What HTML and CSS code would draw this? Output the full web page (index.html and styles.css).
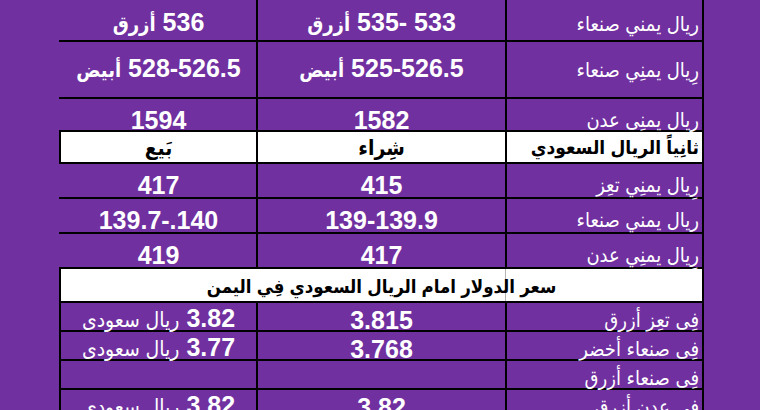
FILE: index.html
```html
<!DOCTYPE html>
<html lang="ar">
<head>
<meta charset="utf-8">
<title>أسعار الصرف</title>
<link rel="stylesheet" href="styles.css">
</head>
<body>
<table class="rates" dir="rtl">
  <colgroup>
    <col class="c-label">
    <col class="c-mid">
    <col class="c-side">
  </colgroup>
  <tr class="r1">
    <td class="label">ريال يمني صنعاء</td>
    <td class="num">533 -535 <span class="ar">أزرق</span></td>
    <td class="num">536 <span class="ar">أزرق</span></td>
  </tr>
  <tr class="r2">
    <td class="label">رِيال يمنِي صنعاء</td>
    <td class="num">525-526.5 <span class="ar">أبيض</span></td>
    <td class="num">528-526.5 <span class="ar">أبيض</span></td>
  </tr>
  <tr class="r3">
    <td class="label">ريال يمنِى عدن</td>
    <td class="num">1582</td>
    <td class="num">1594</td>
  </tr>
  <tr class="head">
    <td class="hlabel">ثانِياً الريال السعودي</td>
    <td class="hcol">شِراء</td>
    <td class="hcol">بَيع</td>
  </tr>
  <tr class="r35">
    <td class="label">رِيال يمنِي تعِز</td>
    <td class="num">415</td>
    <td class="num">417</td>
  </tr>
  <tr class="r35">
    <td class="label">ريال يمني صنعاء</td>
    <td class="num">139-139.9</td>
    <td class="num">140.-139.7</td>
  </tr>
  <tr class="r35">
    <td class="label">رِيال يمنِي عدن</td>
    <td class="num">417</td>
    <td class="num">419</td>
  </tr>
  <tr class="head head2">
    <td class="htitle" colspan="3">سعر الدولار امام الريال السعودي فِي اليمن</td>
  </tr>
  <tr class="r29">
    <td class="label">فِى تعِز أزرق</td>
    <td class="num">3.815</td>
    <td class="num">3.82 <span class="unit">ريال سعودى</span></td>
  </tr>
  <tr class="r29">
    <td class="label">فِى صنعاء أخضر</td>
    <td class="num">3.768</td>
    <td class="num">3.77 <span class="unit">ريال سعودى</span></td>
  </tr>
  <tr class="r29">
    <td class="label">فِى صنعاء أزرق</td>
    <td class="num"></td>
    <td class="num"></td>
  </tr>
  <tr class="r29">
    <td class="label">فِى عدن أزرق</td>
    <td class="num">3.82</td>
    <td class="num">3.82 <span class="unit">ريال سعودى</span></td>
  </tr>
</table>
</body>
</html>
```
FILE: styles.css
```css
html, body {
  margin: 0;
  padding: 0;
}

body {
  background: #7030a0;
  font-family: "Liberation Sans", "DejaVu Sans Condensed", "DejaVu Sans", sans-serif;
  color: #fff;
  overflow: hidden;
}

.rates {
  border-collapse: collapse;
  table-layout: fixed;
  width: 645px;
  margin: -16px 0 0 59px;
}

.c-label { width: 197px; }
.c-mid { width: 249px; }
.c-side { width: 197px; }

.rates td {
  border: 2px solid #000;
  padding: 0 0 2px 0;
  font-size: 25px;
  line-height: 20px;
  vertical-align: bottom;
  white-space: nowrap;
}

.rates tr:not(.head):not(.r29) td:last-child {
  border-left-color: transparent;
}

.rates .r1 td {
  border-top: 0;
}

.rates td.label {
  text-align: right;
  padding-right: 3px;
  font-weight: normal;
  font-size: 20px;
}

.num {
  text-align: center;
  font-weight: bold;
}

.ar {
  font-size: 20px;
}

.unit {
  font-weight: normal;
  font-size: 21px;
}

.r1 { height: 57px; }
.rates .r1 td { padding-bottom: 6px; }

.r2 { height: 57px; }
.rates .r2 td { padding-bottom: 17px; }

.r3 { height: 33px; }
.rates .r3 td { padding-bottom: 0; }

.head { height: 32px; }
.rates .head td {
  background: #fff;
  color: #000;
  font-weight: bold;
  padding-bottom: 4px;
}

.rates td.hlabel {
  text-align: right;
  padding-right: 3px;
  font-size: 19px;
}

.rates td.hcol {
  text-align: center;
  font-size: 21px;
}

.head2 { height: 34px; }

.rates td.htitle {
  text-align: center;
  font-size: 18.5px;
  background: linear-gradient(to right, #fff 0 444px, #b5b5b5 444px 445px, #fff 445px);
}

.r35 { height: 35px; }
.rates .r35 td { padding-bottom: 2px; }

.r29 { height: 29px; }
.rates .r29 td { padding-bottom: 0; }
```
